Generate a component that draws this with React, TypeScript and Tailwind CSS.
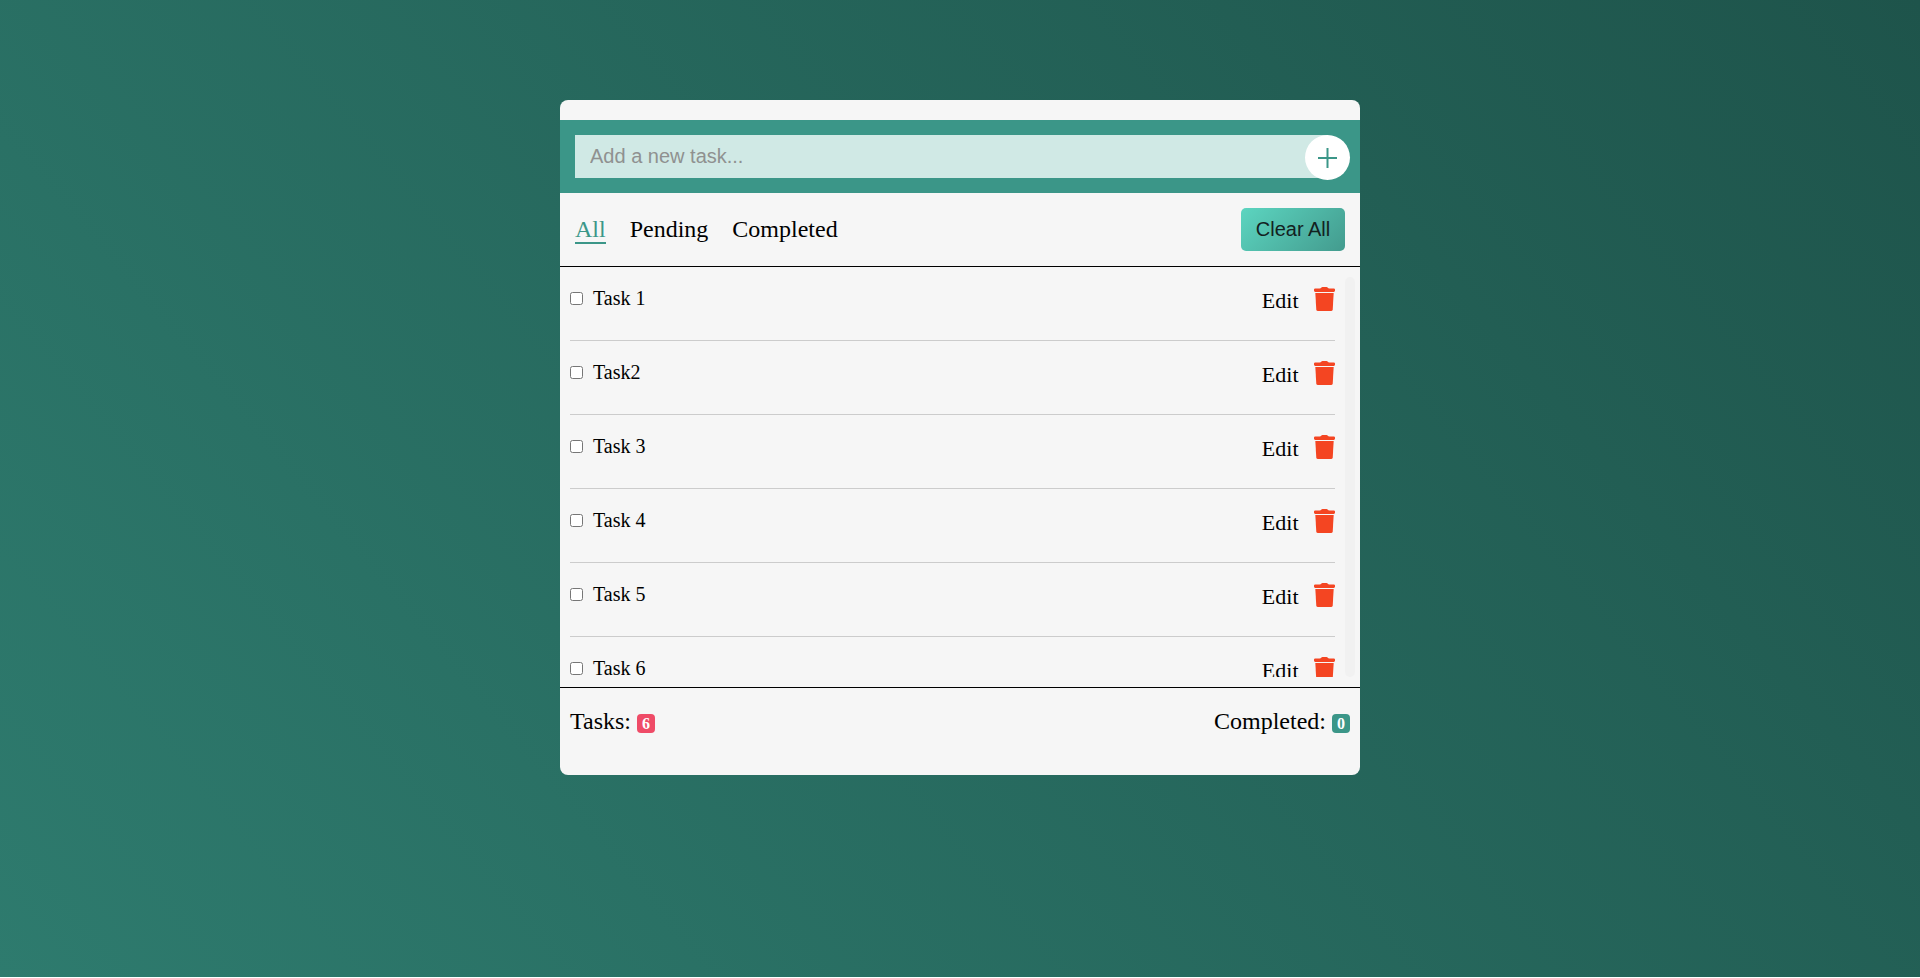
import { useState } from "react";

const initialTasks = ["Task 1", "Task2", "Task 3", "Task 4", "Task 5", "Task 6"];
const filters = ["All", "Pending", "Completed"];

function TrashIcon() {
  return (
    <svg viewBox="0 0 21 24" className="h-6 w-[21px] fill-[#f44522]">
      <path d="M1.2 1.4H5.6Q6.8 1.2 7.4 0.4Q7.8 0 8.4 0H12.6Q13.2 0 13.6 0.4Q14.2 1.2 15.4 1.4H19.8Q21 1.4 21 2.6V3.8Q21 4.9 19.8 4.9H1.2Q0 4.9 0 3.8V2.6Q0 1.4 1.2 1.4Z" />
      <path d="M1.3 6H19.7L18.7 22.4Q18.6 24 17 24H4Q2.4 24 2.3 22.4Z" />
    </svg>
  );
}

export default function App() {
  const [active, setActive] = useState("All");
  const [tasks, setTasks] = useState(initialTasks.map((name) => ({ name, done: false })));
  return (
    <div className="flex h-[977px] items-start justify-center bg-[linear-gradient(50deg,#2e7b6e,#1e544b)] pt-[100px] font-['Liberation_Serif',serif] text-black">
      <main className="h-[675px] w-[800px] overflow-hidden rounded-[8px] bg-[#f6f6f6] pt-5">
        <div className="flex h-[73px] items-start bg-[#3b9688] py-[15px] pr-2.5 pl-[15px]">
          <input
            placeholder="Add a new task..."
            className="h-[43px] w-[752px] shrink-0 bg-[#d0e9e5] px-[15px] font-['Liberation_Sans',sans-serif] text-[20px] outline-none placeholder:text-[#8f9190]"
          />
          <button className="-ml-[22px] flex size-[45px] shrink-0 items-center justify-center rounded-full bg-white pt-px">
            <svg viewBox="0 0 19 20" className="h-5 w-[19px] fill-[#3b9688]">
              <path d="M0 9h19v2H0zM8.5 0h2v20h-2z" />
            </svg>
          </button>
        </div>
        <div className="flex h-[74px] items-center justify-between border-b border-black px-[15px]">
          <nav className="mt-6 flex gap-6 self-start text-[24px] leading-[25px]">
            {filters.map((f) => (
              <button
                key={f}
                onClick={() => setActive(f)}
                className={f === active ? "border-b-2 border-[#3b9688] text-[#3b9688]" : "border-b-2 border-transparent"}
              >
                {f}
              </button>
            ))}
          </nav>
          <button
            onClick={() => setTasks([])}
            className="h-[43px] w-[104px] rounded-[5px] bg-[linear-gradient(135deg,#5cd5c0,#439b8e)] pb-0.5 font-['Liberation_Sans',sans-serif] text-[20px] text-[#13211f]"
          >
            Clear All
          </button>
        </div>
        <div className="flex h-[420px] items-stretch py-2.5 pr-[5px] pl-2.5">
          <ul className="flex-1 overflow-hidden">
            {tasks.map((t, i) => (
              <li key={t.name} className="mb-2.5 flex h-16 items-start justify-between border-b border-[#cccccc]">
                <label className="flex items-center gap-2.5 pt-[10px] text-[20px] leading-[23px]">
                  <input
                    type="checkbox"
                    checked={t.done}
                    onChange={() => setTasks(tasks.map((x, j) => (j === i ? { ...x, done: !x.done } : x)))}
                    className="size-[13px]"
                  />
                  {t.name}
                </label>
                <div className="flex items-start gap-[15.5px] pt-[10px]">
                  <button className="pt-px text-[22px] leading-[25px]">Edit</button>
                  <TrashIcon />
                </div>
              </li>
            ))}
          </ul>
          <div className="ml-2.5 w-2.5 rounded-[5px] bg-[#f1f1f1]" />
        </div>
        <footer className="flex justify-between border-t border-black px-2.5 pt-5 text-[24px] leading-[27px]">
          <p className="flex items-start gap-1.5">
            Tasks:
            <span className="mt-[6px] h-[19px] w-[18px] rounded-[4px] bg-[#ef4b67] text-center text-[16px] leading-[19px] font-bold text-white">{tasks.length}</span>
          </p>
          <p className="flex items-start gap-1.5">
            Completed:
            <span className="mt-[6px] h-[19px] w-[18px] rounded-[4px] bg-[#3b9688] text-center text-[16px] leading-[19px] font-bold text-white">
              {tasks.filter((t) => t.done).length}
            </span>
          </p>
        </footer>
      </main>
    </div>
  );
}
